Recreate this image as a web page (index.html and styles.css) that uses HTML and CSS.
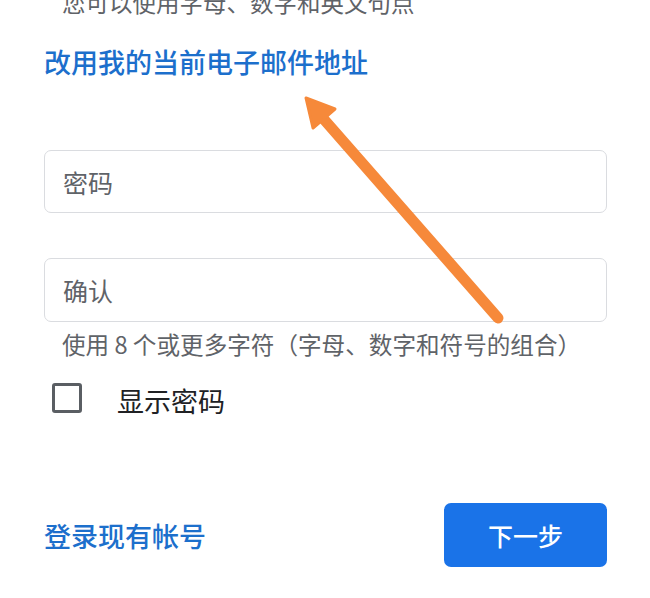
FILE: index.html
```html
<!DOCTYPE html>
<html lang="zh-CN">
<head>
<meta charset="utf-8">
<title>创建密码</title>
<link rel="stylesheet" href="styles.css">
</head>
<body>
<div class="page">
  <p class="note">您可以使用字母、数字和英文句点</p>
  <a class="alt-link" href="#">改用我的当前电子邮件地址</a>

  <div class="field field-password"><span class="placeholder">密码</span></div>
  <div class="field field-confirm"><span class="placeholder">确认</span></div>
  <p class="hint">使用 8 个或更多字符（字母、数字和符号的组合）</p>

  <label class="show-row">
    <span class="checkbox"></span>
    <span class="show-label">显示密码</span>
  </label>

  <div class="footer">
    <a class="signin" href="#">登录现有帐号</a>
    <button class="next" type="button">下一步</button>
  </div>
</div>

<svg class="arrow" width="650" height="598" viewBox="0 0 650 598" xmlns="http://www.w3.org/2000/svg">
  <line x1="321" y1="116" x2="498" y2="318" stroke="#f6893a" stroke-width="11" stroke-linecap="round"/>
  <polygon points="306,98 313,128 335,109" fill="#f6893a" stroke="#f6893a" stroke-width="3" stroke-linejoin="round"/>
</svg>
</body>
</html>
```

FILE: styles.css
```css
html, body {
  margin: 0;
  padding: 0;
  background: #ffffff;
}

body {
  width: 650px;
  height: 598px;
  overflow: hidden;
  position: relative;
  font-family: "Noto Sans CJK SC", "Noto Sans", sans-serif;
}

.page {
  padding: 0 43px 0 44px;
  display: flex;
  flex-direction: column;
}

.note {
  margin: -12px 0 0 0;
  padding-left: 18px;
  font-size: 23.5px;
  line-height: 28px;
  color: #5f6368;
}

.alt-link {
  margin-top: 30px;
  font-size: 27px;
  line-height: 32px;
  font-weight: 500;
  color: #1c6fcc;
  text-decoration: none;
  align-self: flex-start;
}

.field {
  box-sizing: border-box;
  height: 63px;
  border: 1.5px solid #dadce0;
  border-radius: 7px;
  display: flex;
  align-items: center;
  padding-left: 18px;
}

.field-password {
  margin-top: 72px;
}

.field-confirm {
  margin-top: 45px;
  height: 64px;
}

.placeholder {
  font-size: 25px;
  color: #5f6368;
}

.hint {
  margin: 8px 0 0 0;
  padding-left: 18px;
  font-size: 23.6px;
  line-height: 28px;
  color: #5f6368;
}

.show-row {
  margin-top: 25px;
  display: flex;
  align-items: center;
  height: 30px;
}

.checkbox {
  box-sizing: border-box;
  width: 30px;
  height: 30px;
  margin-left: 8px;
  border: 3px solid #5a5e63;
  border-radius: 3px;
}

.show-label {
  margin-left: 35px;
  font-size: 27px;
  color: #202124;
  position: relative;
  top: 2px;
}

.footer {
  margin-top: 90px;
  display: flex;
  justify-content: space-between;
  align-items: center;
}

.signin {
  font-size: 27px;
  font-weight: 500;
  color: #1c6fcc;
  text-decoration: none;
}

.next {
  width: 163px;
  height: 64px;
  border: none;
  border-radius: 7px;
  background: #1a73e8;
  color: #ffffff;
  font-family: "Noto Sans CJK SC", "Noto Sans", sans-serif;
  font-size: 25px;
  font-weight: 500;
  padding: 0;
}

.arrow {
  position: absolute;
  left: 0;
  top: 0;
  pointer-events: none;
}
```
